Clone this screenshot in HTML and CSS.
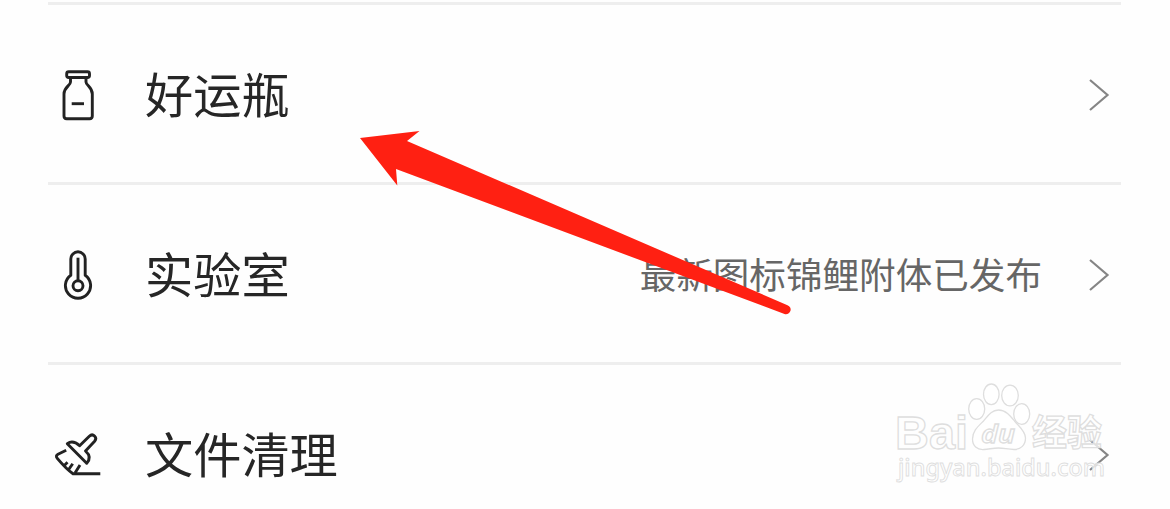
FILE: index.html
```html
<!DOCTYPE html>
<html lang="zh-CN">
<head>
    <meta charset="UTF-8">
    <meta name="viewport" content="width=device-width, initial-scale=1.0">
    <title>设置</title>
    <link rel="stylesheet" href="styles.css">
</head>
<body>
    <main class="menu">
        <div class="menu-item">
            <svg class="icon" viewBox="0 0 60 60">
                <rect x="18.7" y="6.7" width="22.8" height="5.8" rx="2"/>
                <path d="M22.5 12.5V17C22.5 20.5 16 22 16 29V51Q16 53.7 18.7 53.7H41.6Q44.3 53.7 44.3 51V29C44.3 22 38 20.5 38 17V12.5"/>
                <path d="M23.7 38.7H36"/>
            </svg>
            <span class="label">好运瓶</span>
            <svg class="chevron" viewBox="0 0 22 34"><path d="M2 2L19.5 17L2 32"/></svg>
        </div>

        <div class="menu-item">
            <svg class="icon" viewBox="0 0 60 60">
                <path d="M22.8 30.3V14A7.2 7.2 0 0 1 37.2 14V30.3A12.6 12.6 0 1 1 22.8 30.3Z"/>
                <circle cx="30" cy="40.7" r="5"/>
                <path d="M30 12.7V35.7"/>
            </svg>
            <span class="label">实验室</span>
            <span class="note">最新图标锦鲤附体已发布</span>
            <svg class="chevron" viewBox="0 0 22 34"><path d="M2 2L19.5 17L2 32"/></svg>
        </div>

        <div class="menu-item">
            <svg class="icon" viewBox="0 0 60 60">
                <path d="M19.3 18.7C23 16 27 16.5 31.6 20.8L41.3 11.2C45 7.8 49.8 12.4 46.6 16.2L37.5 26C42 30 42.5 34 38.7 38.3Z"/>
                <path d="M18.2 25.2L10 29.2Q7.2 30.8 9.3 33.4C14 39 19.5 45 25 48.7H52.3"/>
                <path d="M32 40L27 48M15.5 41.2L19.5 37.2M20.5 44.8L24.7 38.7"/>
            </svg>
            <span class="label">文件清理</span>
            <svg class="chevron" viewBox="0 0 22 34"><path d="M2 2L19.5 17L2 32"/></svg>
        </div>
    </main>

    <!-- Flecha roja -->
    <svg class="arrow" viewBox="0 0 440 190">
        <path d="M10 18L69.5 11L57 21L437.5 185.2A4.6 4.6 0 0 1 434.5 194L46 49L47.3 65.5Z"/>
    </svg>

    <!-- Marca de agua -->
    <svg class="watermark" viewBox="0 0 245 120">
        <ellipse cx="111.3" cy="19.3" rx="7.8" ry="10.3"/>
        <ellipse cx="130" cy="20.5" rx="8.3" ry="10.3"/>
        <ellipse cx="96.7" cy="34" rx="8" ry="10.3"/>
        <ellipse cx="141.7" cy="39" rx="8" ry="10.3"/>
        <path d="M118.5 35C111 35 107.5 41.5 103.5 46C98 51.5 92.5 56 92.5 64C92.5 71 97 75 104 74.5C110 74 113 73 118.5 73C124 73 128 74.5 134 74.5C141 74.5 145.5 70 145.5 63C145.5 56 139 51.5 134.5 46C130.5 41 126 35 118.5 35Z"/>
        <text class="brand" x="15" y="74" textLength="73" lengthAdjust="spacingAndGlyphs">Bai</text>
        <text class="paw-text" x="101" y="68" textLength="34" lengthAdjust="spacingAndGlyphs">du</text>
        <text class="brand-cn" x="152" y="71" textLength="70" lengthAdjust="spacingAndGlyphs">经验</text>
        <text class="url" x="18" y="101" textLength="207" lengthAdjust="spacingAndGlyphs">jingyan.baidu.com</text>
    </svg>
</body>
</html>
```
FILE: styles.css
```css
body {
    font-family: "Noto Sans CJK SC", sans-serif;
    background-color: #fefefe;
    margin: 0;
    padding: 0;
    height: 509px;
    position: relative;
    overflow: hidden;
}

.menu {
    padding: 2px 49px 0 48px;
}

.menu-item {
    display: flex;
    align-items: center;
    padding: 60px 11px 57px 0;
    border-top: 3px solid #eeeeee;
}

.menu-item:last-child {
    padding-bottom: 0;
}

.icon {
    width: 60px;
    height: 60px;
    margin-right: 37px;
    fill: none;
    stroke: #222222;
    stroke-width: 2.9;
    stroke-linejoin: round;
}

.label {
    flex: 1;
    padding-bottom: 6px;
    font-size: 48.2px;
    line-height: 52px;
    color: #262626;
    white-space: nowrap;
}

.note {
    margin-right: 46px;
    padding-bottom: 2px;
    font-size: 36.6px;
    line-height: 50px;
    color: #666666;
    white-space: nowrap;
}

.chevron {
    width: 22px;
    height: 34px;
    fill: none;
    stroke: #858585;
    stroke-width: 2.2;
}

.arrow {
    position: absolute;
    left: 350px;
    top: 120px;
    width: 440px;
    height: 190px;
    overflow: visible;
    fill: #ff2012;
}

.watermark {
    position: absolute;
    left: 880px;
    top: 375px;
    width: 245px;
    height: 120px;
    fill: rgba(255, 255, 255, 0.75);
    stroke: #dedede;
    stroke-width: 1.3;
}

.brand {
    font: bold 47px "Liberation Sans", Arial, sans-serif;
}

.paw-text {
    font: italic 600 26px "Noto Sans", sans-serif;
}

.brand-cn {
    font: bold 36px "Noto Sans CJK SC", sans-serif;
}

.url {
    font: 500 23px "Noto Sans", sans-serif;
    stroke-width: 0.9;
}
```
